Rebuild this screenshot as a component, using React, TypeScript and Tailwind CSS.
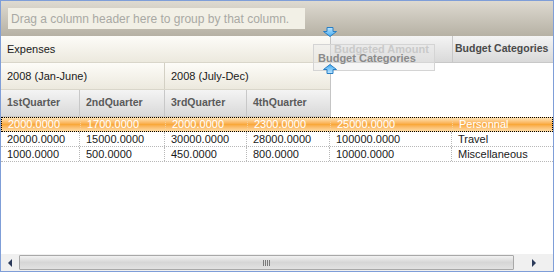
import { ReactNode } from 'react';

const cols = [79, 85, 82, 83, 122, 100];

const rows = [
  ['2000.0000', '1700.0000', '2000.0000', '2300.0000', '25000.0000', 'Personnal'],
  ['20000.0000', '15000.0000', '30000.0000', '28000.0000', '100000.0000', 'Travel'],
  ['1000.0000', '500.0000', '450.0000', '800.0000', '10000.0000', 'Miscellaneous'],
];

function Arrow({ up }: { up?: boolean }) {
  return (
    <svg width="14" height="10" viewBox="0 0 14 10" className={up ? 'rotate-180' : ''}>
      <defs>
        <linearGradient id={up ? 'au' : 'ad'} x1="0" y1="0" x2="0" y2="1">
          <stop offset="0" stopColor="#bfe6ff" />
          <stop offset="1" stopColor="#3fa9f0" />
        </linearGradient>
      </defs>
      <path
        d="M4 0.5h6v4h3.5L7 9.5 0.5 4.5H4z"
        fill={`url(#${up ? 'au' : 'ad'})`}
        stroke="#2a7fc4"
        strokeWidth="1"
      />
    </svg>
  );
}

function BandCell({ w, children }: { w: number; children?: ReactNode }) {
  return (
    <div
      style={{ width: w }}
      className="flex h-full shrink-0 items-center border-r border-[#d3d0c4] pl-[6px]"
    >
      {children}
    </div>
  );
}

export default function App() {
  return (
    <div className="relative flex h-[272px] w-[554px] flex-col overflow-hidden border border-[#7f9ed8] bg-white font-['Liberation_Sans',Arial,sans-serif] text-[11px] whitespace-nowrap text-[#1a1a1a]">
      {/* group panel */}
      <div className="h-[35px] shrink-0 bg-gradient-to-b from-[#dedad1] to-[#b6b1a4] pl-[7px] pt-[7px]">
        <div className="flex h-[21px] w-[297px] items-center bg-[#f2f0e6] pl-[3px] text-[12px] text-[#a9a9a4]">
          Drag a column header here to group by that column.
        </div>
      </div>

      {/* header */}
      <div className="flex shrink-0">
        <div className="flex w-[330px] flex-col border-r border-[#c5c5c5]">
          <div className="flex h-[27px] items-center border-b border-[#d9d6ca] bg-gradient-to-b from-[#fdfcf8] to-[#ece9de] pl-[6px]">
            Expenses
          </div>
          <div className="flex h-[27px] border-b border-[#d9d6ca] bg-gradient-to-b from-[#fdfcf8] to-[#ece9de]">
            <BandCell w={164}>2008 (Jan-June)</BandCell>
            <div className="flex h-full items-center pl-[6px]">2008 (July-Dec)</div>
          </div>
          <div className="flex h-[27px] border-b border-[#c8c8c8] bg-gradient-to-b from-[#f4f4f4] to-[#d9d9d9] text-[10.5px] font-bold text-[#5a5a5a]">
            {['1stQuarter', '2ndQuarter', '3rdQuarter', '4thQuarter'].map((q, i) => (
              <div
                key={q}
                style={{ width: i === 3 ? 82 : cols[i] }}
                className={`flex h-full shrink-0 items-center pl-[6px] ${i < 3 ? 'border-r border-[#c8c8c8]' : ''}`}
              >
                {q}
              </div>
            ))}
          </div>
        </div>
        <div className="flex h-[27px] w-[122px] shrink-0 items-center border-r border-b border-[#c8c8c8] bg-gradient-to-b from-[#f4f4f4] to-[#d9d9d9] pl-[3px] text-[11px] font-bold text-[#b4b4b4]">
          Budgeted Amount
        </div>
        <div className="flex h-[27px] flex-1 items-center border-b border-[#c8c8c8] bg-gradient-to-b from-[#f4f4f4] to-[#d9d9d9] pl-[2px] text-[10.5px] font-bold text-[#4a4a4a]">
          Budget Categories
        </div>
      </div>

      {/* rows */}
      <div className="flex flex-col">
        {rows.map((r, ri) => (
          <div
            key={ri}
            className={`flex h-[15px] ${
              ri === 0
                ? 'border border-dotted border-black bg-gradient-to-b from-[#fde2b2] via-[#f9a83a] to-[#fdd9a0] text-white'
                : 'border-b border-dotted border-[#b8b8b8]'
            }`}
          >
            {r.map((c, ci) => (
              <div
                key={ci}
                style={{ width: cols[ci] }}
                className={`flex h-full shrink-0 items-center pl-[6px] leading-none ${
                  ci < 5 ? 'border-r border-dotted' : ''
                } ${ri === 0 ? 'border-[#f5cf98]' : 'border-[#b8b8b8]'}`}
              >
                {c}
              </div>
            ))}
          </div>
        ))}
      </div>

      <div className="flex-1" />

      {/* horizontal scrollbar */}
      <div className="flex h-[17px] shrink-0 items-center bg-[#f0f0f0]">
        <div className="flex w-[18px] justify-center">
          <div className="h-0 w-0 border-y-[4px] border-r-[4px] border-y-transparent border-r-[#2b3a5a]" />
        </div>
        <div className="flex h-[15px] w-[495px] items-center justify-center rounded-[1px] border border-[#a8a8a8] bg-gradient-to-b from-[#f2f2f2] via-[#d6d6d6] to-[#e2e2e2]">
          <div className="flex gap-[1px]">
            {[0, 1, 2, 3].map((i) => (
              <div key={i} className="h-[6px] w-[1px] bg-[#7a7a7a]" />
            ))}
          </div>
        </div>
        <div className="flex flex-1 justify-center">
          <div className="h-0 w-0 border-y-[4px] border-l-[4px] border-y-transparent border-l-[#2b3a5a]" />
        </div>
      </div>

      {/* drag cue */}
      <div className="absolute left-[312px] top-[43px] flex h-[27px] w-[122px] items-center border border-[#d4d4d4] bg-[#e8e8e8]/40 pl-[4px] pt-[2px] text-[11px] font-bold text-[#8a8a8a]">
        Budget Categories
      </div>
      <div className="absolute left-[322px] top-[26px]">
        <Arrow />
      </div>
      <div className="absolute left-[322px] top-[63px]">
        <Arrow up />
      </div>
    </div>
  );
}
